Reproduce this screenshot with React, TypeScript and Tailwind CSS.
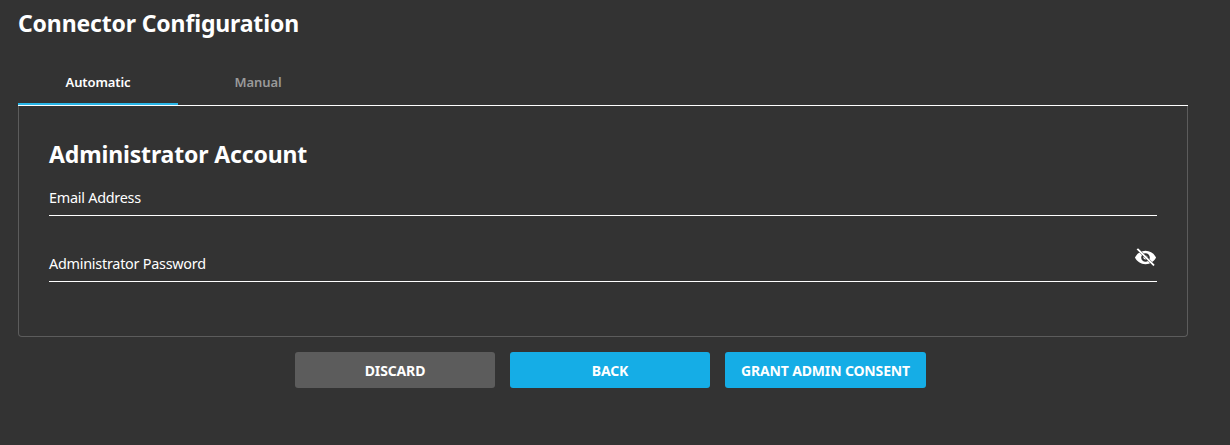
export default function App() {
  return (
    <div className="w-[1230px] h-[445px] bg-[#333333] overflow-hidden text-white pl-[18px] pr-[42px] font-['Noto_Sans','Open_Sans',sans-serif]">
      <h1 className="h-[47px] text-[23px] leading-[46px] font-bold tracking-[-0.15px]">Connector Configuration</h1>
      <div className="flex h-[59px] border-b border-white">
        <div className="w-[160px] h-[58px] flex items-center justify-center pt-[15px] text-[13px] font-semibold tracking-[-0.1px] border-b-2 border-[#29b6e8]">Automatic</div>
        <div className="w-[160px] h-[58px] flex items-center justify-center pt-[13px] text-[13px] font-semibold tracking-[-0.1px] text-[#9a9a9a]">Manual</div>
      </div>
      <div className="h-[231px] border border-t-0 border-[#5c5c5c] rounded-b-[4px] pl-[30px] pr-[30px] pt-[33px]">
        <h2 className="text-[23px] leading-[30px] font-bold tracking-[-0.15px]">Administrator Account</h2>
        <div className="mt-[10px] h-[37px] border-b border-white flex items-end pb-[7px] text-[14.4px] leading-[20px] tracking-[-0.25px]">Email Address</div>
        <div className="mt-[29px] h-[37px] border-b border-white flex items-end justify-between pb-[7px] text-[14.4px] leading-[20px] tracking-[-0.25px]">
          <span>Administrator Password</span>
          <svg viewBox="0 0 24 24" className="w-[23px] h-[23px] mb-[5px] text-white" fill="currentColor">
            <path d="M12 5C7 5 3 8 1 12c2 4 6 7 11 7s9-3 11-7c-2-4-6-7-11-7zm0 11.5a4.5 4.5 0 1 1 0-9 4.5 4.5 0 0 1 0 9z" />
            <circle cx="12" cy="12" r="2.2" />
            <path d="M4.2 2 21.8 19.6l-1.6 1.6L2.6 3.6z" stroke="#333333" strokeWidth="0.5" />
          </svg>
        </div>
      </div>
      <div className="flex justify-center gap-[15px] mt-[15px] pl-[15px]">
        <button className="w-[200px] h-[36px] rounded-[3px] bg-[#5c5c5c] text-[14px] font-bold tracking-[-0.15px]">DISCARD</button>
        <button className="w-[200px] h-[36px] rounded-[3px] bg-[#15ade6] text-[14px] font-bold tracking-[-0.15px]">BACK</button>
        <button className="w-[201px] h-[36px] rounded-[3px] bg-[#15ade6] text-[14px] font-bold tracking-[-0.15px]">GRANT ADMIN CONSENT</button>
      </div>
    </div>
  );
}
